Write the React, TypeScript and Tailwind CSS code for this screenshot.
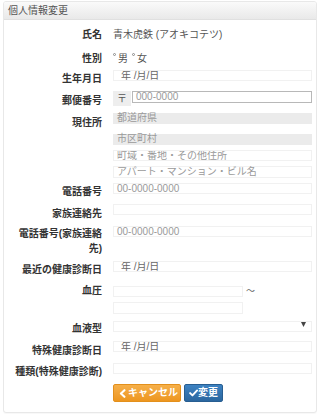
import React from "react";

function ChevronLeft() {
  return (
    <svg width="7" height="9" viewBox="0 0 8 10" className="shrink-0">
      <path d="M6.2 1.2 L2.2 5 L6.2 8.8" fill="none" stroke="white" strokeWidth="2.4" strokeLinecap="round" strokeLinejoin="round" />
    </svg>
  );
}

function Check() {
  return (
    <svg width="9" height="8" viewBox="0 0 12 10" className="shrink-0">
      <path d="M1.5 5.2 L4.6 8.2 L10.8 1.6" fill="none" stroke="white" strokeWidth="2.6" strokeLinecap="round" strokeLinejoin="round" />
    </svg>
  );
}

function TextBox({ placeholder }: { placeholder?: string }) {
  return (
    <div className="box-border h-[11px] w-full border border-[#f1f1f1] bg-white pl-[3px] text-[10px] leading-[9px] text-[#9a9a9a] whitespace-nowrap overflow-hidden">
      {placeholder ?? "\u00a0"}
    </div>
  );
}

function DateBox() {
  return (
    <div className="box-border h-[11px] w-full border border-[#f1f1f1] bg-white pl-[7px] text-[10px] leading-[9px] text-[#666666] whitespace-nowrap overflow-hidden">
      年 /月/日
    </div>
  );
}

export default function App() {
  return (
    <div className="w-[320px] h-[417px] bg-white font-[family-name:'Liberation_Sans','Noto_Sans_CJK_JP',sans-serif] text-[10px]">
      <div className="mx-[3px] mt-[1px] box-border rounded-[3px] border border-[#e8e8e8] bg-white shadow-[0_1px_1px_rgba(0,0,0,0.03)]">
        <div className="h-[18px] border-b border-[#e0e0e0] bg-gradient-to-b from-[#fafafa] to-[#e9e9e9] pl-[4px] leading-[18px] text-[10px] text-[#555555] rounded-t-[2px]">
          個人情報変更
        </div>
        <div className="flex flex-col pt-[7px] pb-[10px]">
          {/* 氏名 */}
          <div className="flex h-[24px]">
            <div className="ml-[8px] w-[90px] text-right font-bold leading-[15px] text-[#333333]">氏名</div>
            <div className="ml-[11px] w-[199px] leading-[15px] text-[#555555]">青木虎鉄 (アオキコテツ)</div>
          </div>
          {/* 性別 */}
          <div className="flex h-[19px]">
            <div className="ml-[8px] w-[90px] text-right font-bold leading-[15px] text-[#333333]">性別</div>
            <div className="ml-[11px] flex w-[199px] items-start leading-[15px] text-[#555555]">
              <span className="mt-[2px] box-border inline-block h-[3px] w-[3px] rounded-full border border-[#8a8a8a]"></span>
              <span className="ml-[2px]">男</span>
              <span className="mt-[2px] ml-[4px] box-border inline-block h-[3px] w-[3px] rounded-full border border-[#8a8a8a]"></span>
              <span className="ml-[2px]">女</span>
            </div>
          </div>
          {/* 生年月日 */}
          <div className="flex h-[21px]">
            <div className="ml-[8px] w-[90px] pt-[1px] text-right font-bold leading-[15px] text-[#333333]">生年月日</div>
            <div className="ml-[11px] w-[199px]">
              <DateBox />
            </div>
          </div>
          {/* 郵便番号 */}
          <div className="flex h-[22px]">
            <div className="ml-[8px] w-[90px] pt-[2px] text-right font-bold leading-[15px] text-[#333333]">郵便番号</div>
            <div className="ml-[11px] flex w-[199px] items-start">
              <div className="box-border flex h-[15px] w-[18px] items-center justify-center bg-[#eeeeee] text-[10px] leading-[10px] text-[#555555]">〒</div>
              <div className="ml-[1px] box-border h-[12px] flex-1 border border-[#b8b8b8] bg-white pl-[3px] text-[10px] leading-[10px] text-[#9a9a9a]">000-0000</div>
            </div>
          </div>
          {/* 現住所 */}
          <div className="flex h-[70px]">
            <div className="ml-[8px] w-[90px] pt-[1.5px] text-right font-bold leading-[15px] text-[#333333]">現住所</div>
            <div className="ml-[11px] flex w-[199px] flex-col">
              <div className="h-[11px] bg-[#ebebeb] pl-[4px] text-[10px] leading-[10px] text-[#9a9a9a]">都道府県</div>
              <div className="mt-[10px] h-[11px] bg-[#ebebeb] pl-[4px] text-[10px] leading-[10px] text-[#9a9a9a]">市区町村</div>
              <div className="mt-[5px]">
                <TextBox placeholder="町域・番地・その他住所" />
              </div>
              <div className="mt-[5px]">
                <div className="box-border h-[12px] w-full border border-[#f1f1f1] bg-white pl-[3px] text-[10px] leading-[10px] text-[#9a9a9a] whitespace-nowrap">アパート・マンション・ビル名</div>
              </div>
            </div>
          </div>
          {/* 電話番号 */}
          <div className="flex h-[21px]">
            <div className="ml-[8px] w-[90px] pt-[0.5px] text-right font-bold leading-[15px] text-[#333333]">電話番号</div>
            <div className="ml-[11px] w-[199px]">
              <TextBox placeholder="00-0000-0000" />
            </div>
          </div>
          {/* 家族連絡先 */}
          <div className="flex h-[22px]">
            <div className="ml-[8px] w-[90px] pt-[1.5px] text-right font-bold leading-[15px] text-[#333333]">家族連絡先</div>
            <div className="ml-[11px] w-[199px]">
              <TextBox />
            </div>
          </div>
          {/* 電話番号(家族連絡先) */}
          <div className="flex h-[35px]">
            <div className="ml-[8px] w-[90px] text-right font-bold leading-[15px] text-[#333333]">電話番号(家族連絡先)</div>
            <div className="ml-[11px] w-[199px]">
              <TextBox placeholder="00-0000-0000" />
            </div>
          </div>
          {/* 最近の健康診断日 */}
          <div className="flex h-[22px]">
            <div className="ml-[8px] w-[90px] pt-[1px] text-right font-bold leading-[15px] text-[#333333] whitespace-nowrap">最近の健康診断日</div>
            <div className="ml-[11px] w-[199px]">
              <DateBox />
            </div>
          </div>
          {/* 血圧 */}
          <div className="flex h-[38px]">
            <div className="ml-[8px] w-[90px] text-right font-bold leading-[15px] text-[#333333]">血圧</div>
            <div className="ml-[11px] flex w-[199px] flex-col pt-[3px]">
              <div className="flex items-start">
                <div className="w-[130px]">
                  <TextBox />
                </div>
                <span className="ml-[3px] mt-[-1px] text-[9px] leading-[12px] text-[#666666]">〜</span>
              </div>
              <div className="mt-[5px] w-[130px]">
                <div className="box-border h-[12px] w-full border border-[#f1f1f1] bg-white"></div>
              </div>
            </div>
          </div>
          {/* 血液型 */}
          <div className="flex h-[20px]">
            <div className="ml-[8px] w-[90px] text-right font-bold leading-[15px] text-[#333333]">血液型</div>
            <div className="ml-[11px] w-[199px]">
              <div className="box-border flex h-[11px] w-full items-start justify-end border border-[#f1f1f1] bg-white pr-[5px]">
                <svg width="5" height="5" viewBox="0 0 5 5">
                  <path d="M0 0 L5 0 L2.5 5 Z" fill="#444444" />
                </svg>
              </div>
            </div>
          </div>
          {/* 特殊健康診断日 */}
          <div className="flex h-[22px]">
            <div className="ml-[8px] w-[90px] pt-[1.5px] text-right font-bold leading-[15px] text-[#333333] whitespace-nowrap">特殊健康診断日</div>
            <div className="ml-[11px] w-[199px]">
              <DateBox />
            </div>
          </div>
          {/* 種類(特殊健康診断) */}
          <div className="flex h-[21px]">
            <div className="ml-[8px] w-[90px] pt-[1px] text-right font-bold leading-[15px] text-[#333333] whitespace-nowrap">種類(特殊健康診断)</div>
            <div className="ml-[11px] w-[199px]">
              <TextBox />
            </div>
          </div>
          {/* Buttons */}
          <div className="flex h-[18px]">
            <div className="ml-[109px] flex gap-[3px]">
              <button className="box-border flex h-[18px] w-[68px] items-center gap-[2px] rounded-[2px] border border-[#e3901c] bg-gradient-to-b from-[#f6b049] to-[#ed961e] pl-[5px] text-[10px] font-bold leading-[10px] text-white">
                <ChevronLeft />
                <span>キャンセル</span>
              </button>
              <button className="box-border flex h-[18px] w-[39px] items-center rounded-[2px] border border-[#285e91] bg-gradient-to-b from-[#3d82c2] to-[#2b679f] pl-[4px] text-[10px] font-bold leading-[10px] text-white">
                <Check />
                <span>変更</span>
              </button>
            </div>
          </div>
        </div>
      </div>
    </div>
  );
}
